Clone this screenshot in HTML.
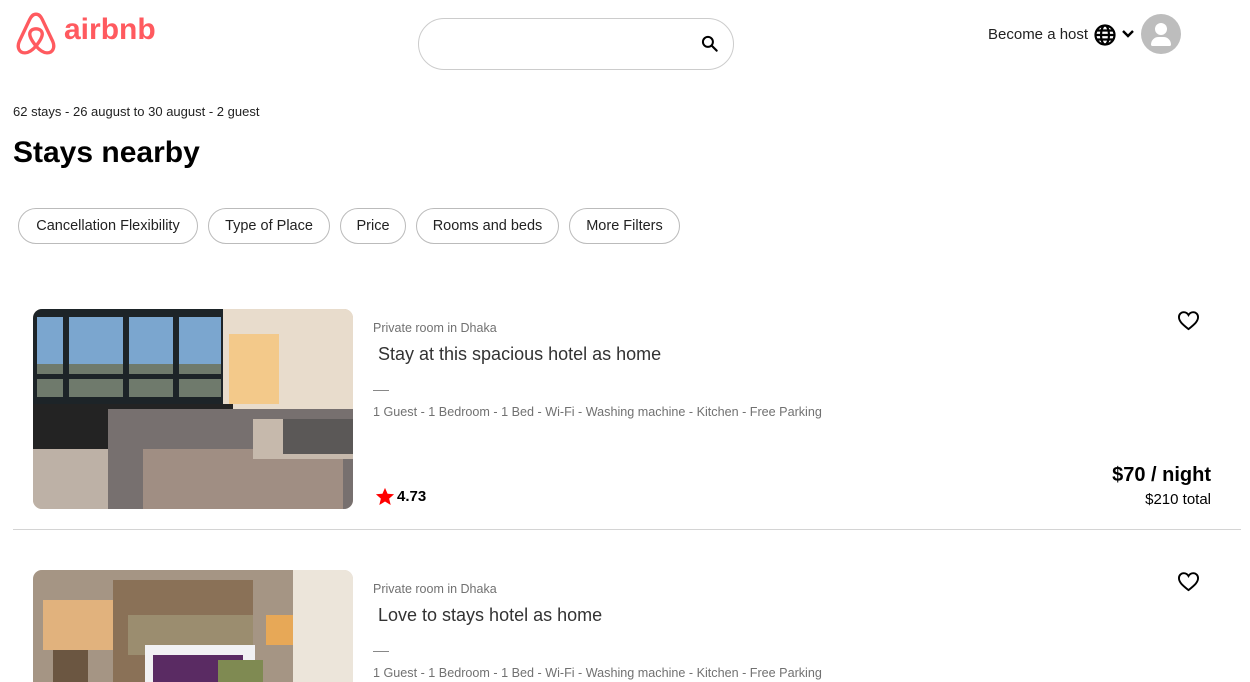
<!DOCTYPE html>
<html><head><meta charset="utf-8"><style>
*{margin:0;padding:0;box-sizing:border-box}
body{width:1250px;height:682px;overflow:hidden;background:#fff;font-family:"Liberation Sans","DejaVu Sans",sans-serif;color:#000;position:relative}
.a{position:absolute}
.pill{position:absolute;top:208px;height:36px;border:1px solid #bbb;border-radius:18px;font-size:14.5px;color:#222;display:flex;align-items:center;justify-content:center}
.sub{font-size:12.5px;color:#717171}
.title{font-size:18px;color:#333}
.am{font-size:12.6px;color:#717171}
</style></head><body>
<svg class="a" style="left:14px;top:10px" width="44" height="46" viewBox="0 0 42 44"><path d="M21 4 C18 4 16.5 6 15 9 L5 30 C2.5 36 5 41 10.5 41 C14 41 17.5 38.5 21 34.5 C24.5 38.5 28 41 31.5 41 C37 41 39.5 36 37 30 L27 9 C25.5 6 24 4 21 4 Z M21 34.5 C17 29.5 15 26 15 23 C15 20 17.5 18 21 18 C24.5 18 27 20 27 23 C27 26 25 29.5 21 34.5 Z" fill="none" stroke="#ff5a5f" stroke-width="3.2" stroke-linejoin="round"/></svg>
<div class="a" style="left:64px;top:13px;font-size:30px;font-weight:bold;color:#ff5a5f">airbnb</div>
<div class="a" style="left:418px;top:18px;width:316px;height:52px;border:1px solid #ccc;border-radius:26px"></div>
<svg class="a" style="left:700px;top:34px" width="20" height="20" viewBox="0 0 24 24"><circle cx="9.5" cy="9.5" r="6" fill="none" stroke="#000" stroke-width="2.4"/><path d="M14 14 L20 20" stroke="#000" stroke-width="2.6" stroke-linecap="round"/></svg>
<div class="a" style="left:988px;top:26px;font-size:15px;color:#222">Become a host</div>
<svg class="a" style="left:1093px;top:23px" width="24" height="24" viewBox="0 0 24 24" fill="none" stroke="#000" stroke-width="2.2"><circle cx="12" cy="12" r="9.5"/><ellipse cx="12" cy="12" rx="4" ry="9.5"/><path d="M2.5 12h19M4 7.5h16M4 16.5h16"/></svg>
<svg class="a" style="left:1121px;top:28px" width="14" height="12" viewBox="0 0 14 12"><path d="M2 3 L7 8 L12 3" fill="none" stroke="#000" stroke-width="2.4"/></svg>
<div class="a" style="left:1141px;top:14px;width:40px;height:40px;border-radius:50%;background:#bdbdbd;overflow:hidden">
<div class="a" style="left:14px;top:9px;width:12px;height:12px;border-radius:50%;background:#fff"></div>
<div class="a" style="left:10px;top:23px;width:20px;height:9px;border-radius:10px 10px 2px 2px;background:#fff"></div></div>
<div class="a" style="left:13px;top:104px;font-size:13px;color:#222">62 stays - 26 august to 30 august - 2 guest</div>
<div class="a" style="left:13px;top:136px;font-size:30px;font-weight:bold">Stays nearby</div>
<div class="pill" style="left:18px;width:180px">Cancellation Flexibility</div>
<div class="pill" style="left:208px;width:122px">Type of Place</div>
<div class="pill" style="left:340px;width:66px">Price</div>
<div class="pill" style="left:416px;width:143px">Rooms and beds</div>
<div class="pill" style="left:569px;width:111px">More Filters</div>

<svg class="a" style="left:33px;top:309px;border-radius:9px" width="320" height="200" viewBox="0 0 320 200">
<rect width="320" height="200" fill="#d9c3a8"/>
<rect x="0" y="0" width="190" height="100" fill="#1d2428"/>
<rect x="4" y="8" width="184" height="80" fill="#7ba6cf"/>
<rect x="4" y="55" width="184" height="33" fill="#6f7a6c"/>
<rect x="30" y="5" width="6" height="90" fill="#1d2428"/><rect x="90" y="5" width="6" height="90" fill="#1d2428"/><rect x="140" y="5" width="6" height="90" fill="#1d2428"/>
<rect x="4" y="65" width="184" height="5" fill="#1d2428"/>
<rect x="190" y="0" width="130" height="110" fill="#e8dccc"/>
<rect x="196" y="25" width="50" height="70" fill="#f3c98a"/>
<rect x="0" y="95" width="200" height="45" fill="#232323"/>
<rect x="0" y="140" width="90" height="60" fill="#bdb1a6"/>
<rect x="75" y="100" width="245" height="100" fill="#77706f"/>
<rect x="110" y="140" width="200" height="60" fill="#a08e83"/>
<rect x="220" y="110" width="100" height="40" fill="#c6b9ac"/>
<rect x="250" y="110" width="70" height="35" fill="#5b5857"/>
</svg>
<div class="a sub" style="left:373px;top:321px">Private room in Dhaka</div>
<div class="a title" style="left:378px;top:344px">Stay at this spacious hotel as home</div>
<div class="a" style="left:373px;top:390px;width:16px;height:1px;background:#888"></div>
<div class="a am" style="left:373px;top:405px">1 Guest - 1 Bedroom - 1 Bed - Wi-Fi - Washing machine - Kitchen - Free Parking</div>
<svg class="a" style="left:375px;top:487px" width="20" height="19" viewBox="0 0 24 23"><path d="M12 1l3.1 7.2 7.9.6-6 5.2 1.9 7.8L12 17.6 5.1 21.8 7 14 1 8.8l7.9-.6z" fill="#f00"/></svg>
<div class="a" style="left:397px;top:488px;font-size:15px;font-weight:bold">4.73</div>
<svg class="a" style="left:1177px;top:310px" width="23" height="21" viewBox="0 0 24 22"><path d="M12 20 C5 14.5 2 11.5 2 7.5 C2 4.5 4.3 2.3 7 2.3 C9 2.3 11 3.5 12 5.3 C13 3.5 15 2.3 17 2.3 C19.7 2.3 22 4.5 22 7.5 C22 11.5 19 14.5 12 20 Z" fill="none" stroke="#000" stroke-width="2"/></svg>
<div class="a" style="right:39px;top:464px;font-size:20px;font-weight:bold">$70 / night</div>
<div class="a" style="right:39px;top:491px;font-size:15px">$210 total</div>
<div class="a" style="left:13px;top:529px;width:1228px;height:1px;background:#d4d4d4"></div>

<svg class="a" style="left:33px;top:570px;border-radius:9px 9px 0 0" width="320" height="112" viewBox="0 0 320 112">
<rect width="320" height="112" fill="#d8cfc6"/>
<rect x="0" y="0" width="260" height="112" fill="#a59584"/>
<rect x="80" y="10" width="140" height="102" fill="#8a7157"/>
<rect x="95" y="45" width="125" height="40" fill="#9b8d6f"/>
<rect x="10" y="30" width="70" height="50" fill="#e1b27d"/>
<rect x="20" y="80" width="35" height="32" fill="#6b5641"/>
<rect x="233" y="45" width="35" height="30" fill="#e7a857"/>
<rect x="260" y="0" width="60" height="112" fill="#ece5da"/>
<rect x="112" y="75" width="110" height="37" fill="#f1f1f3"/>
<rect x="120" y="85" width="90" height="27" fill="#5a2b63"/>
<rect x="185" y="90" width="45" height="22" fill="#7f8a52"/>
</svg>
<div class="a sub" style="left:373px;top:582px">Private room in Dhaka</div>
<div class="a title" style="left:378px;top:605px">Love to stays hotel as home</div>
<div class="a" style="left:373px;top:651px;width:16px;height:1px;background:#888"></div>
<div class="a am" style="left:373px;top:666px">1 Guest - 1 Bedroom - 1 Bed - Wi-Fi - Washing machine - Kitchen - Free Parking</div>
<svg class="a" style="left:1177px;top:571px" width="23" height="21" viewBox="0 0 24 22"><path d="M12 20 C5 14.5 2 11.5 2 7.5 C2 4.5 4.3 2.3 7 2.3 C9 2.3 11 3.5 12 5.3 C13 3.5 15 2.3 17 2.3 C19.7 2.3 22 4.5 22 7.5 C22 11.5 19 14.5 12 20 Z" fill="none" stroke="#000" stroke-width="2"/></svg>
</body></html>
